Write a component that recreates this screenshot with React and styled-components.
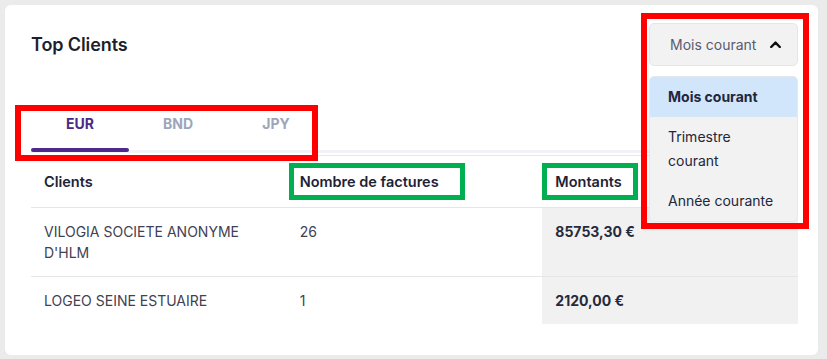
import React, { useState } from 'react';
import styled, { createGlobalStyle } from 'styled-components';

const GlobalStyle = createGlobalStyle`
    body {
        margin: 0;
        background: #ebebeb;
        font-family: Inter, "Noto Sans", sans-serif;
    }
`;

const StyledPage = styled.div`
    position: relative;
    width: 827px;
    height: 359px;
    padding: 5px 9px 4px 5px;
    box-sizing: border-box;
`;

const StyledCard = styled.div`
    height: 100%;
    box-sizing: border-box;
    background: #ffffff;
    border-radius: 6px;
    padding: 18px 20px 0 26px;
`;

const StyledHeader = styled.div`
    display: flex;
    justify-content: space-between;
    align-items: center;
`;

const StyledTitle = styled.h2`
    margin: 0;
    font-size: 18px;
    font-weight: 600;
    color: #1d1f2b;
    letter-spacing: -0.1px;
`;

const StyledDropdown = styled.div`
    position: relative;
    width: 149px;
`;

const StyledDropdownButton = styled.button`
    display: flex;
    align-items: center;
    justify-content: space-between;
    width: 100%;
    height: 43px;
    padding: 0 16px 0 20px;
    box-sizing: border-box;
    background: #f2f2f2;
    border: 1px solid #e1e6ef;
    border-radius: 5px;
    font-family: inherit;
    font-size: 14px;
    color: #5b5a70;
`;

const StyledMenu = styled.ul`
    position: absolute;
    top: 53px;
    left: 0;
    width: 100%;
    margin: 0;
    padding: 0;
    list-style: none;
    box-sizing: border-box;
    background: #f2f2f2;
    border: 1px solid #e6e8ee;
    border-radius: 5px;
    overflow: hidden;
    z-index: 10;
`;

const StyledMenuItem = styled.li`
    padding: 8px 18px;
    font-size: 14px;
    line-height: 24px;
    color: #24263a;
    font-weight: ${({ $active }) => ($active ? 700 : 400)};
    background: ${({ $active }) => ($active ? '#d1e5fb' : 'transparent')};
`;

const StyledTabBar = styled.div`
    display: flex;
    margin-top: 34px;
    border-bottom: 3px solid #f1f3f7;
`;

const StyledTab = styled.button`
    position: relative;
    width: 98px;
    height: 50px;
    padding: 0 0 4px;
    background: none;
    border: 0;
    font-family: inherit;
    font-size: 14px;
    font-weight: 700;
    color: ${({ $active }) => ($active ? '#4b2a85' : '#9ba6bb')};
    &::after {
        content: '';
        position: absolute;
        left: 0;
        right: 0;
        bottom: -2px;
        height: 4px;
        border-radius: 2px;
        background: ${({ $active }) => ($active ? '#4e2a8c' : 'transparent')};
    }
`;

const StyledTable = styled.table`
    width: 100%;
    margin-top: 2px;
    table-layout: fixed;
    border-collapse: collapse;
    border-top: 1px solid #e6e8ec;
`;

const StyledTh = styled.th`
    height: 51px;
    padding: 0 13px;
    text-align: left;
    font-size: 14.5px;
    font-weight: 600;
    color: #1f2235;
    border-bottom: 1px solid #e4e6ea;
`;

const StyledTr = styled.tr`
    border-bottom: ${({ $last }) => ($last ? '0' : '1px solid #e4e6ea')};
`;

const StyledTd = styled.td`
    padding: 13px;
    vertical-align: top;
    font-size: 14px;
    line-height: 21px;
    color: ${({ $amount }) => ($amount ? '#262a3b' : '#414152')};
    font-weight: ${({ $amount }) => ($amount ? 700 : 400)};
    background: ${({ $amount }) => ($amount ? '#f1f1f1' : 'transparent')};
`;

const StyledMark = styled.div`
    position: absolute;
    left: ${({ $x }) => $x}px;
    top: ${({ $y }) => $y}px;
    width: ${({ $w }) => $w}px;
    height: ${({ $h }) => $h}px;
    box-sizing: border-box;
    border: ${({ $t }) => $t}px solid ${({ $color }) => $color};
    pointer-events: none;
    z-index: 20;
`;

const ChevronUp = () => (
    <svg width="11" height="7" viewBox="0 0 11 7" fill="none">
        <polyline points="1.2,6 5.5,1.6 9.8,6" stroke="#111" strokeWidth="2.4" strokeLinecap="round" strokeLinejoin="round" />
    </svg>
);

const clients = [
    { name: "VILOGIA SOCIETE ANONYME D'HLM", count: '26', amount: '85753,30 €' },
    { name: 'LOGEO SEINE ESTUAIRE', count: '1', amount: '2120,00 €' },
];

const periods = ['Mois courant', 'Trimestre courant', 'Année courante'];
const currencies = ['EUR', 'BND', 'JPY'];

const App = () => {
    const [currency, setCurrency] = useState('EUR');
    const [period] = useState('Mois courant');

    return (
        <StyledPage>
            <GlobalStyle />
            <StyledCard>
                <StyledHeader>
                    <StyledTitle>Top Clients</StyledTitle>
                    <StyledDropdown>
                        <StyledDropdownButton>
                            {period}
                            <ChevronUp />
                        </StyledDropdownButton>
                        <StyledMenu>
                            {periods.map((p) => (
                                <StyledMenuItem key={p} $active={p === period}>{p}</StyledMenuItem>
                            ))}
                        </StyledMenu>
                    </StyledDropdown>
                </StyledHeader>

                <StyledTabBar>
                    {currencies.map((c) => (
                        <StyledTab key={c} $active={c === currency} onClick={() => setCurrency(c)}>
                            {c}
                        </StyledTab>
                    ))}
                </StyledTabBar>

                <StyledTable>
                    <thead>
                        <tr>
                            <StyledTh>Clients</StyledTh>
                            <StyledTh>Nombre de factures</StyledTh>
                            <StyledTh>Montants</StyledTh>
                        </tr>
                    </thead>
                    <tbody>
                        {clients.map((row, i) => (
                            <StyledTr key={row.name} $last={i === clients.length - 1}>
                                <StyledTd>{row.name}</StyledTd>
                                <StyledTd>{row.count}</StyledTd>
                                <StyledTd $amount>{row.amount}</StyledTd>
                            </StyledTr>
                        ))}
                    </tbody>
                </StyledTable>
            </StyledCard>

            {/* annotation frames drawn over the screenshot */}
            <StyledMark $x={15} $y={105} $w={303} $h={56} $t={6} $color="#ff0000" />
            <StyledMark $x={641} $y={13} $w={168} $h={216} $t={6} $color="#ff0000" />
            <StyledMark $x={289} $y={163} $w={176} $h={37} $t={5} $color="#00b050" />
            <StyledMark $x={542} $y={163} $w={96} $h={37} $t={5} $color="#00b050" />
        </StyledPage>
    );
};

export default App;
